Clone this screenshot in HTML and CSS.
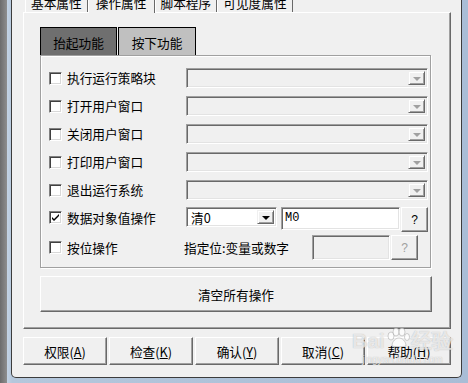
FILE: index.html
```html
<!DOCTYPE html>
<html lang="zh">
<head>
<meta charset="utf-8">
<link rel="stylesheet" href="styles.css">
</head>
<body>
<div class="win">
  <div class="tabs">
    <div class="tab">基本属性</div>
    <div class="tab sel">操作属性</div>
    <div class="tab">脚本程序</div>
    <div class="tab">可见度属性</div>
  </div>
  <div class="page">
    <div class="itabs">
      <div class="itab on">抬起功能</div>
      <div class="itab">按下功能</div>
    </div>
    <div class="ipanel">
      <div class="row"><span class="cb"></span><span class="lbl">执行运行策略块</span><div class="combo dis"><span class="drop"><i class="tri"></i></span></div></div>
      <div class="row"><span class="cb"></span><span class="lbl">打开用户窗口</span><div class="combo dis"><span class="drop"><i class="tri"></i></span></div></div>
      <div class="row"><span class="cb"></span><span class="lbl">关闭用户窗口</span><div class="combo dis"><span class="drop"><i class="tri"></i></span></div></div>
      <div class="row"><span class="cb"></span><span class="lbl">打印用户窗口</span><div class="combo dis"><span class="drop"><i class="tri"></i></span></div></div>
      <div class="row"><span class="cb"></span><span class="lbl">退出运行系统</span><div class="combo dis"><span class="drop"><i class="tri"></i></span></div></div>
      <div class="row r6"><span class="cb on"><svg width="9" height="9" viewBox="0 0 9 9"><path d="M1 4l2 2 5-5v2l-5 5-2-2z" fill="#000"/></svg></span><span class="lbl">数据对象值操作</span><div class="combo small"><span class="val">清0</span><span class="drop"><i class="tri blk"></i></span></div><div class="field">M0</div><span class="qbtn">?</span></div>
      <div class="row r7"><span class="cb"></span><span class="lbl">按位操作</span><span class="hint">指定位:变量或数字</span><div class="field dis"></div><span class="qbtn dis">?</span></div>
    </div>
    <div class="btn big">清空所有操作</div>
  </div>
  <div class="actions">
    <div class="btn">权限(<u>A</u>)</div>
    <div class="btn">检查(<u>K</u>)</div>
    <div class="btn">确认(<u>Y</u>)</div>
    <div class="btn">取消(<u>C</u>)</div>
    <div class="btn">帮助(<u>H</u>)</div>
  </div>
  <div class="wm"><span class="wm1">Bai<svg width="24" height="20" viewBox="0 0 24 20"><g fill="rgba(255,255,255,.75)" stroke="rgba(120,120,120,.35)" stroke-width="1"><ellipse cx="5" cy="8" rx="3" ry="4"/><ellipse cx="10" cy="4" rx="3" ry="4"/><ellipse cx="16" cy="4" rx="3" ry="4"/><ellipse cx="21" cy="9" rx="2.5" ry="3.5"/><path d="M6 18c0-5 4-8 7-8s7 3 7 8c-3 1-11 1-14 0z"/></g></svg>经验</span><span class="wm2">jingyan.baidu.com</span></div>
</div>
</body>
</html>
```
FILE: styles.css
```css
html, body {
  margin: 0;
  padding: 0;
}
body {
  width: 468px;
  height: 383px;
  overflow: hidden;
  background: linear-gradient(to right, #6c6c6c 0, #8e8e8e 7px, #c4d3e3 7px, #b4c7dc 12px, #a9bdd6 100%);
  font-family: "Noto Sans CJK SC", sans-serif;
  font-size: 12.7px;
  color: #000;
}
.win {
  position: relative;
  margin-left: 11px;
  width: 451px;
  height: 378px;
  box-sizing: border-box;
  border: 1px solid #3c3c3c;
  border-top: none;
  border-radius: 0 0 5px 5px;
  background: #f0f0f0;
  padding: 0 10px 0 11px;
}
.tabs {
  display: flex;
  align-items: flex-end;
  height: 12px;
  padding-left: 2px;
  position: relative;
  z-index: 1;
}
.tab {
  height: 12px;
  box-sizing: border-box;
  padding: 0 5px 3px;
  border-left: 1px solid #fff;
  border-right: 1px solid #696969;
  display: flex;
  align-items: flex-end;
  line-height: 13px;
  white-space: nowrap;
}
.tab.sel {
  height: 13px;
  margin-bottom: -1px;
  padding: 0 7px 4px;
  background: #f0f0f0;
}
.page {
  height: 317px;
  box-sizing: border-box;
  border: 1px solid;
  border-color: #fff #696969 #696969 #fff;
  box-shadow: inset -1px -1px 0 #a0a0a0;
  padding: 14px 19px 0 16px;
}
.itabs {
  display: flex;
  gap: 1px;
  height: 28px;
}
.itab {
  width: 77px;
  box-sizing: border-box;
  border: 1px solid #000;
  border-bottom: none;
  display: flex;
  align-items: center;
  justify-content: center;
  background: #c0c0c0;
  padding-top: 1px;
}
.itab + .itab { width: 78px; }
.itab.on { background: #6f6f6f; }
.ipanel {
  height: 213px;
  box-sizing: border-box;
  border: 1px solid #a0a0a0;
  box-shadow: inset 1px 1px 0 #fff, 1px 1px 0 #fff;
  padding: 12px 0 0 8px;
}
.row {
  display: flex;
  align-items: center;
  height: 20px;
  margin-bottom: 8px;
}
.row.r6 {
  align-items: flex-start;
  height: 24px;
  margin-top: -1px;
  margin-bottom: 4px;
}
.row.r6 .cb { margin-top: 4px; }
.row.r6 .lbl { margin-top: 1px; line-height: 20px; }
.row.r7 { height: 25px; }
.cb {
  width: 13px;
  height: 13px;
  box-sizing: border-box;
  border: 1px solid;
  border-color: #808080 #fff #fff #808080;
  box-shadow: inset 1px 1px 0 #404040, inset -1px -1px 0 #d8d8d8;
  background: #fff;
  margin-right: 5px;
  flex: none;
  display: flex;
  align-items: center;
  justify-content: center;
}
.lbl {
  width: 119px;
  flex: none;
  white-space: nowrap;
  line-height: 14px;
}
.combo {
  width: 242px;
  height: 20px;
  box-sizing: border-box;
  border: 1px solid;
  border-color: #a0a0a0 #fff #fff #a0a0a0;
  box-shadow: inset 1px 1px 0 #696969, inset -1px -1px 0 #e3e3e3;
  padding: 2px;
  display: flex;
  justify-content: flex-end;
  flex: none;
}
.combo.dis { background: #f0f0f0; }
.combo.small {
  width: 91px;
  background: #fff;
  justify-content: space-between;
}
.val {
  padding-left: 2px;
  line-height: 15px;
}
.drop {
  width: 17px;
  height: 100%;
  box-sizing: border-box;
  border: 1px solid;
  border-color: #f0f0f0 #696969 #696969 #f0f0f0;
  box-shadow: inset 1px 1px 0 #fff, inset -1px -1px 0 #a0a0a0;
  background: #f0f0f0;
  display: flex;
  align-items: center;
  justify-content: center;
}
.tri {
  width: 0;
  height: 0;
  border-left: 4px solid transparent;
  border-right: 4px solid transparent;
  border-top: 4px solid #a0a0a0;
  margin-top: 1px;
}
.tri.blk { border-top-color: #000; }
.field {
  width: 119px;
  height: 23px;
  margin-left: 4px;
  box-sizing: border-box;
  border: 1px solid;
  border-color: #a0a0a0 #fff #fff #a0a0a0;
  box-shadow: inset 1px 1px 0 #696969, inset -1px -1px 0 #e3e3e3;
  background: #fff;
  padding: 2px 3px;
  font-family: "Liberation Mono", monospace;
  font-size: 12px;
  line-height: 16px;
  flex: none;
}
.field.dis {
  width: 78px;
  height: 25px;
  margin-left: 23px;
  background: #f0f0f0;
}
.hint {
  margin-left: -2px;
  white-space: nowrap;
  line-height: 14px;
}
.qbtn {
  width: 27px;
  height: 25px;
  margin-left: 1px;
  box-sizing: border-box;
  border: 1px solid;
  border-color: #fff #696969 #696969 #fff;
  box-shadow: inset -1px -1px 0 #a0a0a0;
  background: #f0f0f0;
  display: flex;
  align-items: center;
  justify-content: center;
  font-family: "Liberation Sans", sans-serif;
  font-size: 12px;
  flex: none;
}
.qbtn.dis { color: #a0a0a0; }
.btn {
  box-sizing: border-box;
  border: 1px solid;
  border-color: #fff #696969 #696969 #fff;
  box-shadow: inset -1px -1px 0 #a0a0a0;
  background: #f0f0f0;
  display: flex;
  align-items: center;
  justify-content: center;
  white-space: nowrap;
}
.btn.big {
  width: 392px;
  height: 36px;
  margin-top: 8px;
}
.actions {
  display: grid;
  grid-template-columns: repeat(5, 1fr);
  gap: 2px;
  height: 28px;
  margin-top: 8px;
}
.actions .btn { padding-top: 1px; }
.wm {
  position: absolute;
  left: 340px;
  top: 328px;
  display: flex;
  flex-direction: column;
  align-items: center;
  pointer-events: none;
}
.wm1 {
  display: flex;
  align-items: flex-end;
  font-family: "Liberation Sans", sans-serif;
  font-size: 21px;
  font-weight: bold;
  color: rgba(255, 255, 255, 0.7);
  text-shadow: 0 0 1px rgba(90, 90, 90, 0.45);
  line-height: 26px;
}
.wm1 svg { margin: 0 1px 6px; }
.wm2 {
  font-family: "Liberation Sans", sans-serif;
  font-size: 10px;
  color: rgba(255, 255, 255, 0.75);
  text-shadow: 0 0 1px rgba(90, 90, 90, 0.45);
  line-height: 12px;
}
```
